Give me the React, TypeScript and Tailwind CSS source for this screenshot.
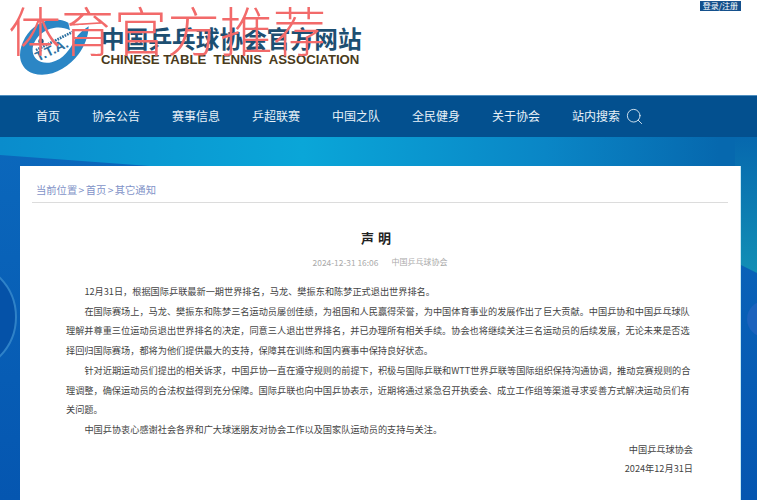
import { Search } from 'lucide-react';

const navItems = ['首页', '协会公告', '赛事信息', '乒超联赛', '中国之队', '全民健身', '关于协会'];

function Logo() {
  return (
    <svg width="70" height="62" viewBox="30 20 210 185" className="shrink-0">
      <path
        d="M175 40C130 15 70 40 45 85C20 130 25 175 70 192C120 207 175 175 205 135C225 108 235 80 236 50C220 60 205 72 195 90C180 120 160 150 125 158C95 165 70 150 68 125C66 95 95 60 135 55C150 53 165 55 180 62Z"
        fill="#2b86c5"
      />
      <circle cx="93" cy="95" r="8" fill="#24557f" />
      <path d="M78 122L188 67" stroke="#2a6f9f" strokeWidth="8" strokeDasharray="5 3" fill="none" />
      <text
        x="84"
        y="157"
        fontSize="41"
        fontWeight="700"
        fill="#2b6f9f"
        transform="rotate(-26 84 157)"
        fontFamily="'Liberation Sans', sans-serif"
      >
        T.T.A.
      </text>
    </svg>
  );
}

function Header() {
  return (
    <header className="relative h-[95px] bg-white">
      <div className="flex items-start pl-[20px] pt-[16px]">
        <Logo />
        <div className="ml-[11px] pt-[9px]">
          <div className="text-[23.7px] leading-[26px] font-bold whitespace-nowrap text-[#1d4f72]">中国乒乓球协会官方网站</div>
          <div className="mt-[1px] font-['Liberation_Sans',sans-serif] text-[13.2px] leading-[15px] font-bold whitespace-pre text-[#4a3b1c]">
            CHINESE TABLE  TENNIS  ASSOCIATION
          </div>
        </div>
      </div>
      <a className="absolute top-[1px] right-[16px] bg-[#14508c] px-[3px] text-[8px] leading-[10px] text-white">登录/注册</a>
    </header>
  );
}

function Nav() {
  return (
    <nav className="flex h-[42px] items-center border-t border-[#4f8fc0] bg-[#03508f] pb-[1px] pl-[36px] text-[12px] text-[#e8f1f8]">
      {navItems.map((item) => (
        <a key={item} className="mr-[32px]">
          {item}
        </a>
      ))}
      <a className="flex items-center gap-[5px]">
        站内搜索
        <Search size={19} strokeWidth={1.1} />
      </a>
    </nav>
  );
}

// the swoosh behind the card
function Backdrop() {
  return (
    <svg width="757" height="363" viewBox="0 0 757 363" className="absolute inset-0">
      <defs>
        <linearGradient id="base" x1="0" y1="0" x2="0" y2="1">
          <stop offset="0" stopColor="#0b68bc" />
          <stop offset="1" stopColor="#0556b0" />
        </linearGradient>
        <linearGradient id="band" x1="0" y1="0" x2="1" y2="0">
          <stop offset="0" stopColor="#0a8ccc" />
          <stop offset="0.4" stopColor="#0aa6d8" />
          <stop offset="0.72" stopColor="#0a86c6" />
          <stop offset="0.95" stopColor="#0668ae" />
        </linearGradient>
        <linearGradient id="strip" x1="0" y1="0" x2="0" y2="1">
          <stop offset="0" stopColor="#0668ae" />
          <stop offset="1" stopColor="#128fb5" />
        </linearGradient>
      </defs>
      <rect width="757" height="363" fill="url(#base)" />
      <path d="M0 0H757V136L741 128L500 40L150 29L0 18Z" fill="url(#band)" />
      <path d="M735 0H757V136L735 125Z" fill="url(#strip)" />
      <circle cx="-40" cy="180" r="56" fill="#0552a8" stroke="#2f82c8" strokeWidth="2" />
      <circle cx="765" cy="182" r="18" fill="#1c63bd" />
    </svg>
  );
}

function Notice() {
  return (
    <main className="relative ml-[20px] h-[334px] w-[721px] border-r border-[#c5e8f5] bg-white pt-[16px] pr-[12px] pl-[12px]">
      <div className="border-b border-[#dcdcdc] pb-[5px] pl-[4px] text-[10.3px] leading-[15px] text-[#7f93c8]">
        当前位置<span className="px-[1.4px]">&gt;</span>首页<span className="px-[1.4px]">&gt;</span>其它通知
      </div>
      <h1 className="mt-[26px] pr-[4px] text-center text-[13px] leading-[18px] font-bold tracking-[4px] text-[#222]">声明</h1>
      <div className="mt-[9px] flex justify-center gap-[13px] text-[8px] leading-[12px] text-[#aaa]">
        <span className="text-[8.4px]">2024-12-31 16:06</span>
        <span>中国乒乓球协会</span>
      </div>
      <article className="mt-[14px] pr-[35px] pl-[34px] text-[9.18px] leading-[19.7px] text-[#444]">
        <p className="indent-[18.4px]">12月31日，根据国际乒联最新一期世界排名，马龙、樊振东和陈梦正式退出世界排名。</p>
        <p className="indent-[18.4px]">
          在国际赛场上，马龙、樊振东和陈梦三名运动员屡创佳绩，为祖国和人民赢得荣誉，为中国体育事业的发展作出了巨大贡献。中国乒协和中国乒乓球队理解并尊重三位运动员退出世界排名的决定，同意三人退出世界排名，并已办理所有相关手续。协会也将继续关注三名运动员的后续发展，无论未来是否选择回归国际赛场，都将为他们提供最大的支持，保障其在训练和国内赛事中保持良好状态。
        </p>
        <p className="indent-[18.4px]">
          针对近期运动员们提出的相关诉求，中国乒协一直在遵守规则的前提下，积极与国际乒联和WTT世界乒联等国际组织保持沟通协调，推动竞赛规则的合理调整，确保运动员的合法权益得到充分保障。国际乒联也向中国乒协表示，近期将通过紧急召开执委会、成立工作组等渠道寻求妥善方式解决运动员们有关问题。
        </p>
        <p className="indent-[18.4px]">中国乒协衷心感谢社会各界和广大球迷朋友对协会工作以及国家队运动员的支持与关注。</p>
        <p className="text-right">中国乒乓球协会</p>
        <p className="text-right">2024年12月31日</p>
      </article>
    </main>
  );
}

export default function App() {
  return (
    <div className="relative h-[500px] w-[757px] overflow-hidden bg-white font-['Noto_Sans_CJK_SC',sans-serif]">
      <Header />
      <Nav />
      <div className="relative h-[363px] pt-[29px]">
        <Backdrop />
        <Notice />
      </div>
      <div className="absolute top-[2px] left-[8px] text-[53px] leading-[54px] font-extralight whitespace-nowrap text-[#f26a6a]">体育官方推荐</div>
    </div>
  );
}
